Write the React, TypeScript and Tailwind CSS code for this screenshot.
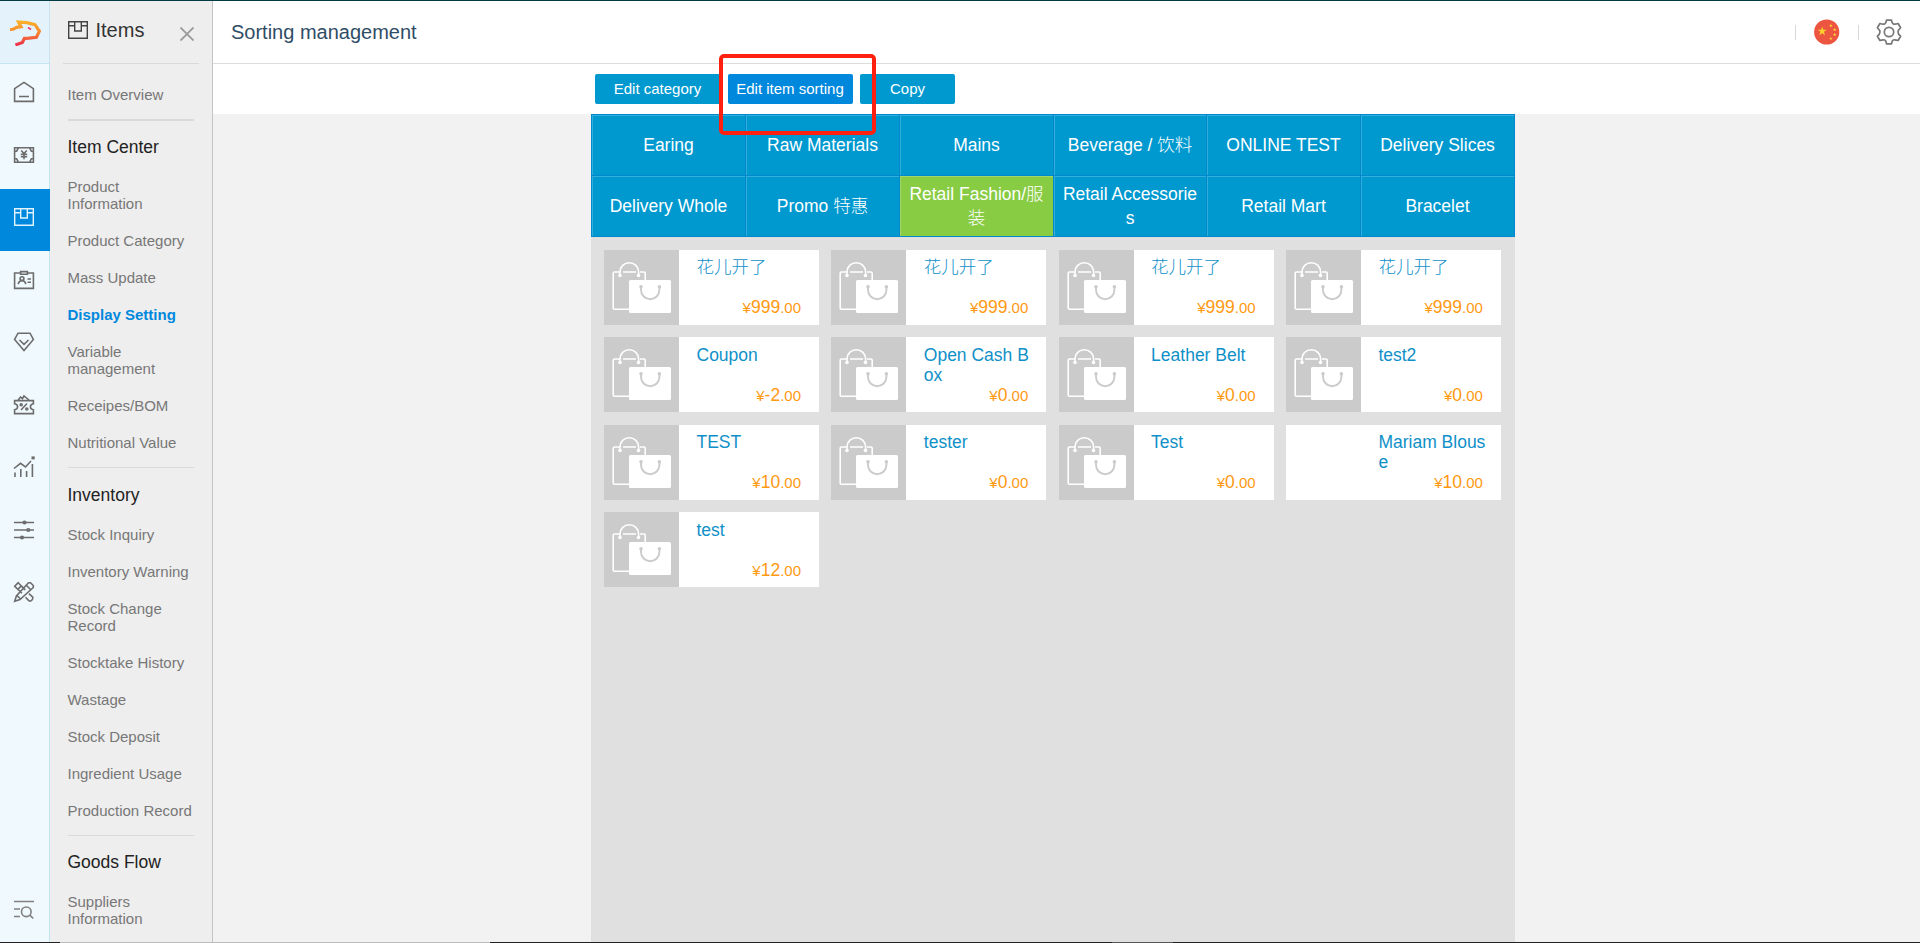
import React from "react";

const latin = "font-['Liberation_Sans','Noto_Sans_CJK_SC',sans-serif]";

function BoxIcon() {
  return (
    <svg width="20" height="18" viewBox="0 0 20 18" fill="none" stroke="currentColor" strokeWidth="1.4">
      <path d="M.7.7h18.600v16.600H.7zM.7 4.700h6M13.300 4.700h6M6.700.7v9.300h6.600V.7" />
    </svg>
  );
}

function Logo() {
  return (
    <svg width="32" height="27" viewBox="0 0 32 27" fill="none" strokeWidth="3.2">
      <defs>
        <linearGradient id="logo" x1="0" y1="0" x2="0" y2="1">
          <stop offset="0" stopColor="#fbb02a" />
          <stop offset="0.5" stopColor="#f58233" />
          <stop offset="1" stopColor="#ee2f4a" />
        </linearGradient>
      </defs>
      <path stroke="url(#logo)" d="M1 10.500l3-.2 3.500-2 4.500-.6-2.500-4.700 8.500.6 8 2 3 4.500 1.400 2-3 6.200-7.500.900-4.500.200-2 4-7 2.500" />
      <path stroke="#ee3f6a" strokeWidth="1.800" d="M19 8.500l3 2" />
    </svg>
  );
}

function Svg({ children }: { children: React.ReactNode }) {
  return (
    <svg width="22" height="22" viewBox="0 0 22 22" fill="none" stroke="currentColor" strokeWidth="1.6">
      {children}
    </svg>
  );
}

const railIcons: React.ReactNode[] = [
  <Svg key="home"><path d="M1.600 20.400V7.600L11 1.400l9.400 6.200v12.800zM6 15.500h10" /></Svg>,
  <Svg key="cash">
    <path d="M1.600 3.800h18.800v14.400H1.600zM1.600 7.200h2l1.800-3.400M20.400 7.200h-2l-1.800-3.400M1.600 14.800h2l1.800 3.400M20.400 14.800h-2l-1.800 3.400M8.200 6.500L11 9.600l2.800-3.100M11 9.600v5.600M7.800 10.200h6.400M7.800 12.600h6.400" />
  </Svg>,
  <BoxIcon key="items" />,
  <Svg key="badge">
    <path d="M7 4H1.600v15.400h18.800V4H15M7.600 2.600h6.800v2.600H7.600zM14.500 10h3.500M14.500 13.200h3.500M5 15l1.500-2.500 2.500-1 2.500 1L13 15" />
    <circle cx="9" cy="9.600" r="1.900" />
  </Svg>,
  <Svg key="gem"><path d="M5 2.200h12l3.400 6.200L11 19.600 1.600 8.400zM6.500 9l4.500 4.300L15.500 9" /></Svg>,
  <Svg key="coupon">
    <path d="M1.600 6.600h18.800v3.200q-3 .4-3 3t3 3v3.800H1.600v-3.800q3-.4 3-3t-3-3zM14 9.500l-6 6.500M5 6.200L7.500 3l2 1.500L11 2l5 4" />
    <circle cx="8.200" cy="10.700" r="1" />
    <circle cx="13.800" cy="15" r="1" />
  </Svg>,
  <Svg key="chart">
    <path d="M2 21v-4.500M7.800 21v-8M13.600 21v-6M19.400 21V8M1 12.500l6.500-5.200 5 3.700L18 5" />
    <path d="M19.300 1.200h1.600v1.400h-1.600z" />
  </Svg>,
  <Svg key="sliders">
    <path d="M1 3.500h20M1 11h20M1 18.500h20" />
    <circle cx="11.500" cy="3.500" r="1.300" /><circle cx="15.300" cy="11" r="1.300" /><circle cx="9" cy="18.500" r="1.300" />
  </Svg>,
  <Svg key="tools">
    <path d="M5.200 1.700l3.100 3.200-3.400 3.400L1.700 5.200zM8.300 4.900l4 4M4.900 8.300l4 4M12.500 16.200l3.500 3.600q1.500.8 2.800-.6t1-3L16 12.700M15.500 1.700h2l2.800 2.800v2L7 18.600 1.700 20.300 3.400 15zM13.800 4.700l3.500 3.500M4 14.500L7.500 18" />
  </Svg>,
];

type Entry = { kind: "head" | "item" | "rule" | "tightRule" | "active"; text?: string };
const menu: Entry[] = [
  { kind: "head", text: "Item Center" },
  { kind: "item", text: "Product Information" },
  { kind: "item", text: "Product Category" },
  { kind: "item", text: "Mass Update" },
  { kind: "active", text: "Display Setting" },
  { kind: "item", text: "Variable management" },
  { kind: "item", text: "Receipes/BOM" },
  { kind: "item", text: "Nutritional Value" },
  { kind: "rule" },
  { kind: "head", text: "Inventory" },
  { kind: "item", text: "Stock Inquiry" },
  { kind: "item", text: "Inventory Warning" },
  { kind: "item", text: "Stock Change Record" },
  { kind: "item", text: "Stocktake History" },
  { kind: "item", text: "Wastage" },
  { kind: "item", text: "Stock Deposit" },
  { kind: "item", text: "Ingredient Usage" },
  { kind: "item", text: "Production Record" },
  { kind: "tightRule" },
  { kind: "head", text: "Goods Flow" },
  { kind: "item", text: "Suppliers Information" },
];

function MenuEntry({ kind, text }: Entry) {
  if (kind === "rule") return <div className="mt-[6px] mb-[8px] h-px bg-[#dadada]" />;
  if (kind === "tightRule") return <div className="mt-[6px] mb-[7px] h-px bg-[#dadada]" />;
  if (kind === "head") return <div className="-ml-[0.5px] h-[40px] pt-[9px] text-[17.5px] leading-[20px] text-[#222]">{text}</div>;
  if (kind === "active")
    return <div className="-ml-[0.5px] py-[10px] text-[15px] leading-[17px] font-bold text-[#0088dd]">{text}</div>;
  return <div className="-ml-[0.5px] py-[10px] text-[15px] leading-[17px] text-[#777]">{text}</div>;
}

const categories = [
  "Earing", "Raw Materials", "Mains", "Beverage / 饮料", "ONLINE TEST", "Delivery Slices",
  "Delivery Whole", "Promo 特惠", "Retail Fashion/服装", "Retail Accessories", "Retail Mart", "Bracelet",
];

const products: { name: string; price: string; blank?: boolean }[] = [
  { name: "花儿开了", price: "999" },
  { name: "花儿开了", price: "999" },
  { name: "花儿开了", price: "999" },
  { name: "花儿开了", price: "999" },
  { name: "Coupon", price: "-2" },
  { name: "Open Cash Box", price: "0" },
  { name: "Leather Belt", price: "0" },
  { name: "test2", price: "0" },
  { name: "TEST", price: "10" },
  { name: "tester", price: "0" },
  { name: "Test", price: "0" },
  { name: "Mariam Blouse", price: "10", blank: true },
  { name: "test", price: "12" },
];

function Bags() {
  return (
    <svg width="75" height="75" viewBox="0 0 75 75" fill="none" className="shrink-0 bg-[#cbcbcb]">
      <g stroke="#fff" strokeWidth="1.600">
        <path d="M16 22H10.500q-1.300 0-1.300 1.300V58q0 1.300 1.300 1.300H26M41.200 31V23.300q0-1.300-1.300-1.300H36M19 22h13M16 26v-4a9.300 9.300 0 0 1 18.600 0v4" />
      </g>
      <circle cx="16" cy="25.500" r="1.800" fill="#fff" />
      <circle cx="34.500" cy="25.500" r="1.800" fill="#fff" />
      <rect x="25" y="30" width="42" height="33" rx="1.500" fill="#fff" />
      <path d="M37 36.500v3.500a9.200 9.200 0 0 0 18.400 0v-3.500" stroke="#cbcbcb" strokeWidth="1.900" />
      <circle cx="37" cy="36.700" r="1.800" fill="#cbcbcb" />
      <circle cx="55.400" cy="36.700" r="1.800" fill="#cbcbcb" />
    </svg>
  );
}

function Flag() {
  const star = "M0-1L.225-.309.951-.309.363.118.588.809 0 .382-.588.809-.363.118-.951-.309-.225-.309z";
  return (
    <svg width="26" height="26" viewBox="0 0 26 26">
      <circle cx="12.700" cy="13" r="12.600" fill="#ec5540" />
      <g fill="#fcd02f">
        <path d={star} transform="translate(8.200 12.300) scale(4.800)" />
        <path d={star} transform="translate(16.900 6.700) scale(1.900)" />
        <path d={star} transform="translate(20.700 10.700) scale(1.900)" />
        <path d={star} transform="translate(20.700 15.700) scale(1.900)" />
        <path d={star} transform="translate(16.900 19.500) scale(1.900)" />
      </g>
    </svg>
  );
}

function Gear() {
  return (
    <svg width="26" height="26" viewBox="0 0 26 26" fill="none" stroke="#777" strokeWidth="1.700" strokeLinejoin="round">
      <path d="M10.500 1.200h5q.3 3 1.800 3.700t4.800-.4l2.500 4.300q-2.600 2-2.600 4.200t2.600 4.200l-2.500 4.300q-3.300-1.100-4.800-.4t-1.800 3.700h-5q-.3-3-1.800-3.700t-4.800.4l-2.500-4.300Q4 15.200 4 13T1.400 8.800l2.500-4.300q3.300 1.100 4.800.4t1.800-3.700z" />
      <circle cx="13" cy="13" r="4.700" />
    </svg>
  );
}

export default function App() {
  return (
    <div className={`relative flex h-[943px] w-[1920px] flex-col overflow-hidden border-t border-[#003c41] bg-[#f2f2f2] ${latin}`}>
      <div className="flex min-h-0 flex-1">
        <nav className="flex w-[50px] shrink-0 flex-col border-r border-[#c5e4f2] bg-[#f0f9fd]">
          <div className="flex h-[63px] shrink-0 items-center justify-center border-b border-[#c5e4f2] bg-[#e4f3fb]"><Logo /></div>
          {railIcons.map((icon, i) =>
            i === 2 ? (
              <div key={i} className="-mr-px mb-[0.5px] flex h-[62px] items-center bg-[#0088dd] pl-[14px] pb-[6px] text-[#e0f3ff]">{icon}</div>
            ) : (
              <div key={i} className="flex h-[62.5px] items-center pl-[13px] pb-[6px] text-[#6c6c6c]">{icon}</div>
            ),
          )}
          <div className="mt-auto pb-[21px] pl-[13px] text-[#808080]">
            <Svg><path d="M1 2.500h20M1 10h6M1 17.500h6M16.800 16.200l3.500 3.300" /><circle cx="13.300" cy="12.800" r="4.800" /></Svg>
          </div>
        </nav>

        <aside className="w-[163px] shrink-0 overflow-hidden border-r border-[#c4c4c4] bg-[#eeeeee]">
          <div className="ml-[13px] flex h-[63px] w-[136px] border-b border-[#dadada] pl-[5px]">
            <div className="mt-[20px] text-[#444]"><BoxIcon /></div>
            <div className="mt-[17px] ml-[7.5px] text-[20px] leading-[24px] text-[#333]">Items</div>
            <svg className="mt-[25.5px] ml-auto mr-[5.5px]" width="14" height="14" viewBox="0 0 14 14" stroke="#999" strokeWidth="1.800"><path d="M.5.5l13 13M13.500.5l-13 13" /></svg>
          </div>
          <div className="ml-[18px] w-[126px]">
            <div className="-ml-[0.5px] pt-[22px] text-[15px] leading-[18px] text-[#777]">Item Overview</div>
            <div className="mt-[15px] mb-[7px] h-[2px] bg-[#dadada]" />
            {menu.map((m, i) => <MenuEntry key={i} {...m} />)}
          </div>
        </aside>

        <main className="flex min-w-0 flex-1 flex-col">
          <header className="flex h-[63px] shrink-0 items-center border-b border-[#dcdcdc] bg-white pl-[18px] text-[20px] text-[#2f4d66]">
            <h1 className="flex-1">Sorting management</h1>
            <div className="h-[15px] w-px bg-[#d8d8d8]" />
            <div className="ml-[18px]"><Flag /></div>
            <div className="ml-[18px] h-[15px] w-px bg-[#d8d8d8]" />
            <div className="mr-[18px] ml-[17px]"><Gear /></div>
          </header>
          <div className="flex h-[50px] shrink-0 bg-white pt-[10px] pl-[382px] text-[15px] text-white">
            <button className="h-[30px] w-[126px] rounded-[2px] bg-[#0099cf] pr-px">Edit category</button>
            <button className="ml-[7px] h-[30px] w-[125px] rounded-[2px] bg-[#0088dd] pr-px">Edit item sorting</button>
            <button className="ml-[7px] h-[30px] w-[95px] rounded-[2px] bg-[#0099cf]">Copy</button>
          </div>
          <section className="ml-[378px] flex w-[924px] flex-1 flex-col bg-[#e0e0e0]">
            <div className="grid h-[123px] grid-cols-[154px_154px_154px_153px_154px_154px] grid-rows-2 border-t border-l border-[#0088cc]">
              {categories.map((c, i) => (
                <div
                  key={c}
                  className={`flex items-center justify-center border-r border-b border-[#0088cc] px-[7px] text-center text-[17.500px] leading-[24px] font-light break-all text-white ${i === 8 ? "bg-[#88cc44] shadow-[inset_1px_1px_0_#a0d66a]" : "bg-[#0099cf] shadow-[inset_1px_1px_0_#33add9]"}`}
                >
                  {c}
                </div>
              ))}
            </div>
            <div className="grid grid-cols-[repeat(4,215px)] gap-x-[12.300px] gap-y-[12.400px] pt-[13px] pl-[13px]">
              {products.map((p, i) => (
                <article key={i} className="flex h-[75px] bg-white">
                  {p.blank ? <div className="w-[75px] shrink-0" /> : <Bags />}
                  <div className="flex flex-1 flex-col pr-[18px] pl-[17.5px]">
                    <div className="-mr-[8px] h-[47.350px] shrink-0 pt-[7.350px] text-[17.500px] leading-[20px] font-light break-all text-[#1090c8]">{p.name}</div>
                    <div className="text-right text-[15px] leading-[20px] text-[#ff9911]">
                      ¥<span className="text-[17.500px]">{p.price}</span>.00
                    </div>
                  </div>
                </article>
              ))}
            </div>
          </section>
        </main>
      </div>
      <div className="flex h-px shrink-0 bg-[#222]">
        <div className="ml-[60px] w-[430px] bg-[#bbb]" />
        <div className="ml-[622px] w-[61px] bg-[#555]" />
      </div>
      <div className="absolute top-[53px] left-[719px] h-[81px] w-[157px] rounded-[5px] border-4 border-[#ff2010]" />
    </div>
  );
}
